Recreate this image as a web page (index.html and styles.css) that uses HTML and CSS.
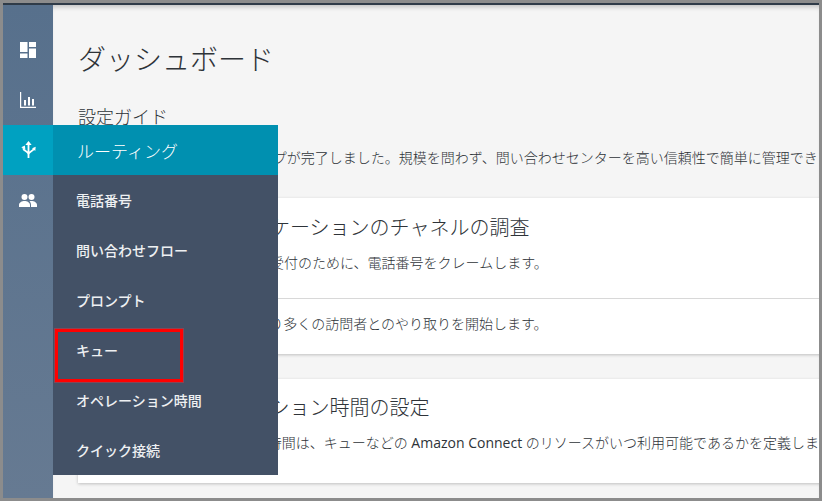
FILE: index.html
```html
<!DOCTYPE html>
<html lang="ja">
<head>
<meta charset="utf-8">
<title>ダッシュボード</title>
<link rel="stylesheet" href="styles.css">
</head>
<body>
<div class="frame">
  <div class="topline"></div>
  <div class="app">
    <nav class="rail">
      <a class="rail-item">
        <svg class="icon" viewBox="0 0 16 16" width="16" height="16"><path fill="#fff" d="M0 0h7.500v10H0zM0 11.500h7.500V16H0zM9 0h7v5H9zM9 6.500h7V16H9z"/></svg>
      </a>
      <a class="rail-item">
        <svg class="icon" viewBox="0 0 16 16" width="16" height="16"><path fill="#fff" d="M0 0h1.200v14.800H16V16H0zM4 8h2v5.500H4zM8 5h2v8.500H8zM12 7h2v6.500h-2z"/></svg>
      </a>
      <a class="rail-item rail-item-active">
        <svg class="icon" viewBox="0 0 16 20" width="15" height="18"><path fill="none" stroke="#fff" stroke-width="2" d="M8 4v15M8 15C8 11 3 12 2 8M8 15c0-3 4-3 6-6"/><path fill="#fff" d="M8 0l3.500 4.500h-7zM0 7l4-2 .5 4.500zM16 6.500l-.5 4.500-3.500-3z"/></svg>
      </a>
      <a class="rail-item">
        <svg class="icon" viewBox="0 0 18 13" width="18" height="13"><circle cx="5.500" cy="3" r="3" fill="#fff"/><circle cx="12.500" cy="3" r="3" fill="#fff"/><path fill="#fff" d="M0 13v-2c0-2.500 3-4 5.500-4S11 8.500 11 11v2zM12 13v-2c0-1.500-.5-2.800-1.500-3.800.6-.1 1.300-.2 2-.2 2.500 0 5.500 1.500 5.500 4v2z"/></svg>
      </a>
    </nav>
    <main class="main">
      <h1 class="page-title">ダッシュボード</h1>
      <h2 class="guide-title">設定ガイド</h2>
      <p class="guide-text">Amazon Connect のセットアップが完了しました。規模を問わず、問い合わせセンターを高い信頼性で簡単に管理できます。</p>
      <section class="card">
        <div class="card-top">
          <h3 class="card-title">コミュニケーションのチャネルの調査</h3>
          <p class="card-text">音声通話の着信受付のために、電話番号をクレームします。</p>
        </div>
        <div class="card-row">
          <p class="card-text">ウェブ上で、より多くの訪問者とのやり取りを開始します。</p>
        </div>
      </section>
      <section class="card card-second">
        <h3 class="card-title">オペレーション時間の設定</h3>
        <p class="card-text">オペレーション時間は、キューなどの <span class="latin">Amazon Connect</span> のリソースがいつ利用可能であるかを定義します。</p>
      </section>
    </main>
    <div class="flyout">
      <div class="flyout-head">ルーティング</div>
      <a class="flyout-item">電話番号</a>
      <a class="flyout-item">問い合わせフロー</a>
      <a class="flyout-item">プロンプト</a>
      <a class="flyout-item">キュー</a>
      <a class="flyout-item">オペレーション時間</a>
      <a class="flyout-item">クイック接続</a>
      <div class="highlight"></div>
    </div>
  </div>
</div>
</body>
</html>
```
FILE: styles.css
```css
* { box-sizing: border-box; }
html, body { margin: 0; height: 100%; overflow: hidden; }
body {
  font-family: "Open Sans", "Noto Sans CJK JP", sans-serif;
  color: #2e3338;
  background: #8c8c8c;
}
.frame {
  width: 822px;
  height: 501px;
  padding: 3px;
  display: flex;
  flex-direction: column;
}
.topline { height: 2px; background: #2f3b48; flex: none; }
.app {
  position: relative;
  flex: 1;
  display: flex;
  min-height: 0;
  overflow: hidden;
  background: #f5f5f5;
}
.rail {
  width: 50px;
  flex: none;
  padding-top: 20px;
  background: linear-gradient(#57708c, #667a92);
  position: relative;
  z-index: 1;
}
.rail-item {
  height: 50px;
  display: flex;
  align-items: center;
  justify-content: center;
}
.rail-item-active { background: #00a1c1; }
.main {
  flex: 1;
  min-width: 0;
  padding: 34px 0 0 25px;
  overflow: hidden;
  box-shadow: inset 0 5px 5px -3px rgba(0, 0, 0, .22);
}
.page-title {
  margin: 0;
  font-size: 28px;
  line-height: 40px;
  font-weight: 300;
  white-space: nowrap;
}
.guide-title {
  margin: 26px 0 0;
  font-size: 18px;
  line-height: 24px;
  font-weight: 300;
}
.guide-text {
  margin: 19px 0 0;
  font-size: 14px;
  line-height: 20px;
  font-weight: 300;
  white-space: nowrap;
}
.card {
  margin: 30px -40px 0 0;
  background: #fff;
  box-shadow: 0 1px 3px rgba(0, 0, 0, .22);
}
.card-top { padding: 16px 0 25px 94px; border-bottom: 1px solid #d8d8d8; }
.card-row { padding: 15px 0 20px 94px; }
.card-second { margin-top: 25px; padding: 15px 0 30px 92px; }
.card-title {
  margin: 0 0 11px 18px;
  font-size: 20px;
  line-height: 28px;
  font-weight: 300;
  white-space: nowrap;
}
.card-second .card-title { margin-left: 20px; }
.card-text {
  margin: 0;
  font-size: 14px;
  line-height: 20px;
  font-weight: 300;
  white-space: nowrap;
}
.latin { font-weight: 400; }
.flyout {
  position: absolute;
  left: 50px;
  top: 120px;
  width: 225px;
  background: #435166;
  z-index: 2;
}
.flyout-head {
  height: 50px;
  padding-left: 24px;
  display: flex;
  align-items: center;
  font-size: 17px;
  font-weight: 300;
  color: #fff;
  background: #0090b0;
}
.flyout-item {
  height: 50px;
  padding-left: 23px;
  display: flex;
  align-items: center;
  font-size: 14px;
  font-weight: 500;
  color: #eef0f2;
}
.highlight {
  position: absolute;
  left: 2px;
  top: 204px;
  width: 128px;
  height: 53px;
  border: 3px solid #f00;
  box-shadow: 0 0 0 1px rgba(200, 60, 70, .5);
}
```
